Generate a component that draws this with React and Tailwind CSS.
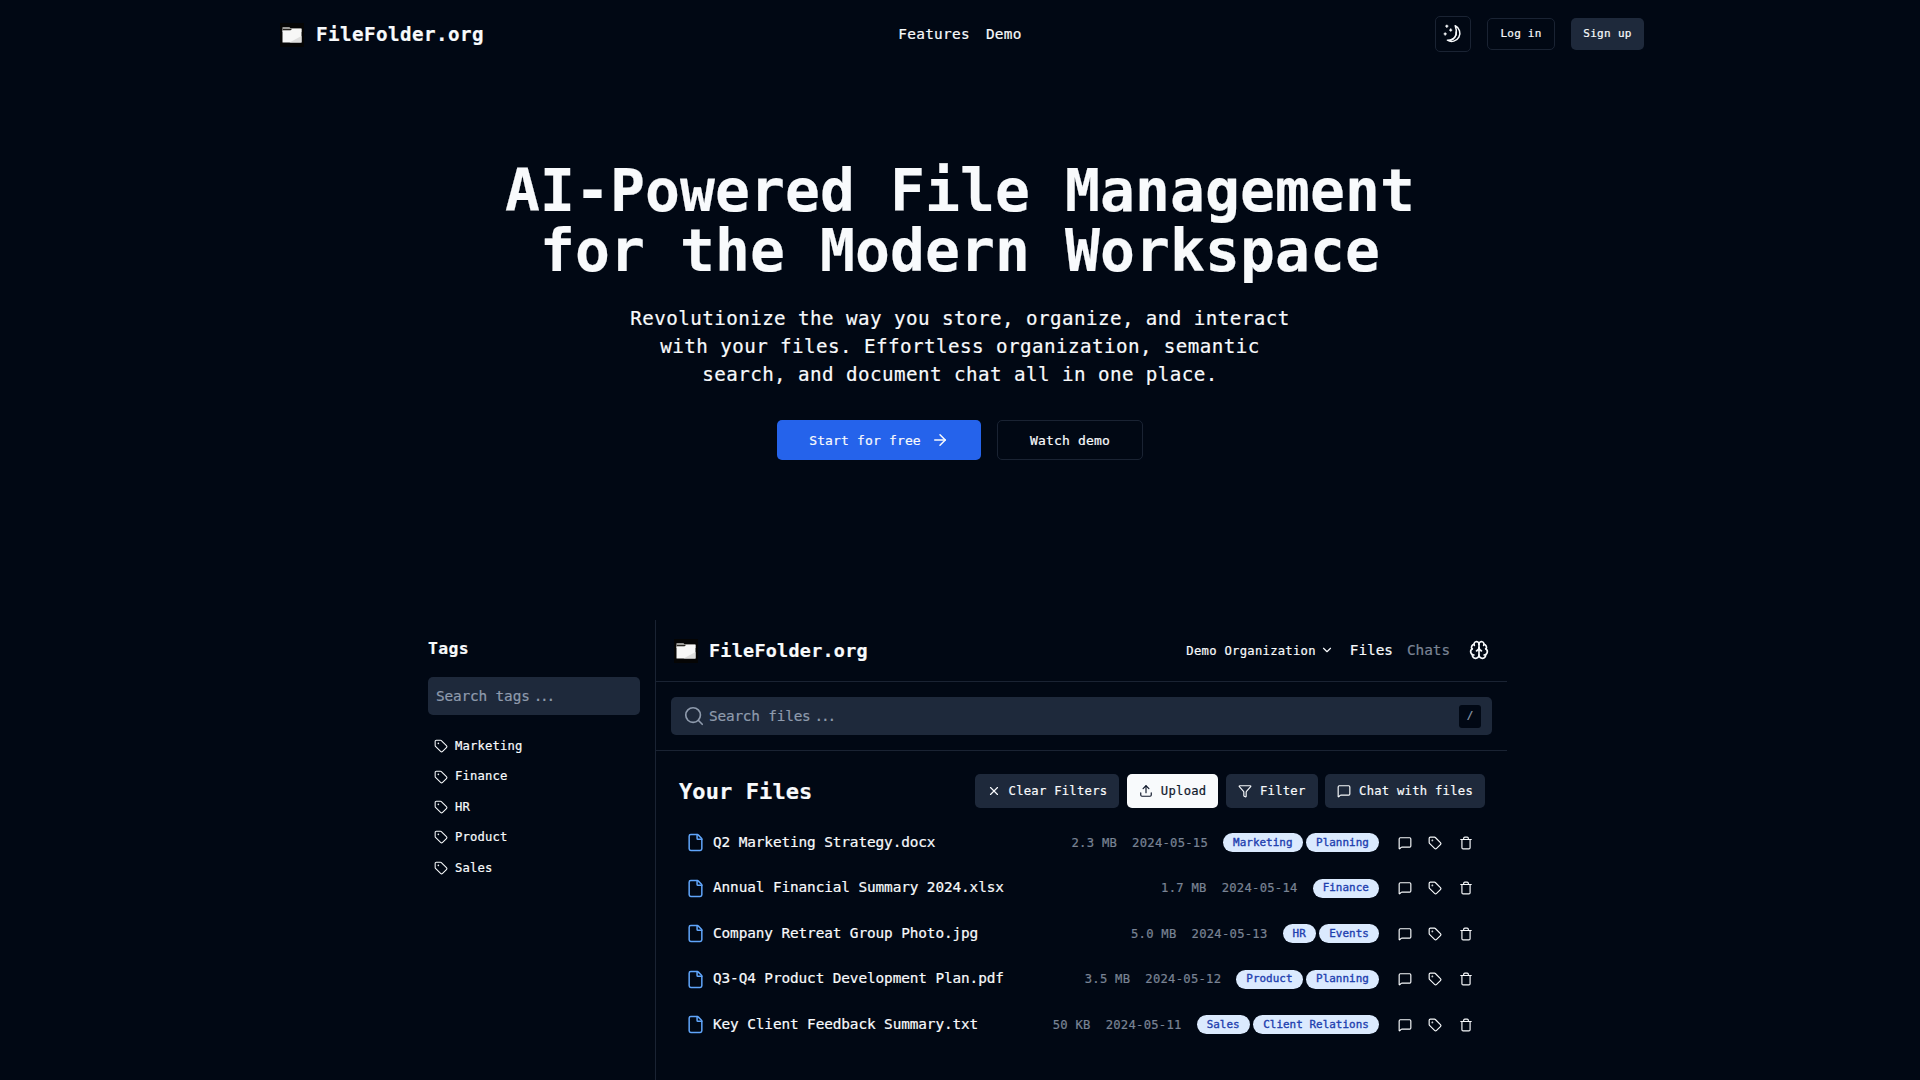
import React from "react";
import { ArrowRight, Brain, ChevronDown, File, Filter, MessageSquare, Search, Tag, Trash, Upload, X } from "lucide-react";

const tags = ["Marketing", "Finance", "HR", "Product", "Sales"];
const files = [
  { name: "Q2 Marketing Strategy.docx", size: "2.3 MB", date: "2024-05-15", tags: ["Marketing", "Planning"] },
  { name: "Annual Financial Summary 2024.xlsx", size: "1.7 MB", date: "2024-05-14", tags: ["Finance"] },
  { name: "Company Retreat Group Photo.jpg", size: "5.0 MB", date: "2024-05-13", tags: ["HR", "Events"] },
  { name: "Q3-Q4 Product Development Plan.pdf", size: "3.5 MB", date: "2024-05-12", tags: ["Product", "Planning"] },
  { name: "Key Client Feedback Summary.txt", size: "50 KB", date: "2024-05-11", tags: ["Sales", "Client Relations"] },
];

function Folder() {
  return (
    <svg className="block h-6 w-6 shrink-0" viewBox="0 0 24 24">
      <rect width="24" height="24" fill="#050505" />
      <path d="M2.500 4.200h7l1 1.100h11V9h-19z" fill="#c9c8c4" />
      <path d="M3 5.800h8l1 .2-1.500 1.500H3z" fill="#26231f" />
      <path d="M2.500 7.600h8l1.800-1.500h9.200v13.400h-19z" fill="#f7f7f6" />
      <path d="M21.500 13v6.500h-12z" fill="#dededd" />
    </svg>
  );
}

function Brand({ compact }) {
  return (
    <div className={compact ? "flex items-center gap-[11px]" : "flex items-center gap-3"}>
      <Folder />
      <span className={"leading-7 font-bold " + (compact ? "text-[18.4px] tracking-[0.28px]" : "text-[19.2px] tracking-[0.44px]")}>FileFolder.org</span>
    </div>
  );
}

function MoonStars() {
  return (
    <svg className="h-5 w-5" viewBox="0 0 20 20" fill="none" stroke="currentColor" strokeLinejoin="round">
      <path d="M12.200 1.800a8.200 8.200 0 1 1-7.800 14.400C9.200 16.200 12.200 14 13 10.600 13.700 7.600 13.400 4.600 12.200 1.800z" strokeWidth="1.500" />
      <path d="M13.400 7.500c.3 4-2.400 7.600-6.400 8.900" strokeWidth="1.500" />
      <path d="M3.800.700v3M2.300 2.200h3M7.700 4.600v3M6.200 6.100h3M2.200 8.400v3M.7 9.900h3" strokeWidth="1.300" />
    </svg>
  );
}

function ToolButton({ icon: Icon, children, light }) {
  return (
    <button className={"flex h-[34px] items-center gap-2 rounded-[5px] px-3 text-[12.2px] tracking-[0.26px] " + (light ? "bg-[#f8fafc] text-[#0f172a]" : "bg-[#1e293b]")}>
      <Icon className="h-[14px] w-[14px]" strokeWidth={2} />
      <span>{children}</span>
    </button>
  );
}

export default function App() {
  return (
    <div className="h-[1080px] overflow-hidden bg-[#010814] font-['DejaVu_Sans_Mono',monospace] text-[#f8fafc] [-webkit-text-stroke:0.2px]">
      <header className="mx-auto grid h-[68px] w-[1364px] grid-cols-[1fr_auto_1fr] items-center">
        <div className="pt-0.5 pl-[2px]"><Brand /></div>
        <nav className="flex gap-4 pt-px text-[14.4px] tracking-[0.29px]">
          <a>Features</a>
          <a>Demo</a>
        </nav>
        <div className="-mr-0.5 flex items-center justify-end gap-4 text-[11px]">
          <button className="flex h-9 w-9 items-center justify-center rounded-[5px] border border-[#1a2333]"><MoonStars /></button>
          <button className="h-8 w-[68px] rounded-[5px] border border-[#1a2333] pt-px tracking-[0.2px]">Log in</button>
          <button className="h-8 w-[73px] rounded-[5px] bg-[#1e293b] pt-px tracking-[0.3px]">Sign up</button>
        </div>
      </header>

      <section className="flex flex-col items-center pt-[93px] text-center">
        <h1 className="text-[58px] leading-[60px] font-bold tracking-[0.08px]">
          AI-Powered File Management<br />for the Modern Workspace
        </h1>
        <p className="mt-6 text-[19.2px] leading-7 tracking-[0.44px]">
          Revolutionize the way you store, organize, and interact<br />
          with your files. Effortless organization, semantic<br />
          search, and document chat all in one place.
        </p>
        <div className="mt-[31px] flex gap-4 text-[13px] tracking-[0.15px]">
          <button className="flex h-10 w-[204px] items-center justify-center gap-2 rounded-[5px] bg-[#2563eb]">
            <span className="pt-px">Start for free</span>
            <ArrowRight className="ml-0.5 h-[18px] w-[18px]" />
          </button>
          <button className="h-10 w-[146px] rounded-[5px] border border-[#1a2333] pt-px">Watch demo</button>
        </div>
      </section>

      <section className="mx-auto mt-[160px] flex h-[460px] w-[1094px]">
        <aside className="w-[243px] shrink-0 border-r border-[#1a2333] pt-[15px] pr-[15px] pl-[15px]">
          <h2 className="text-[16.4px] leading-7 font-bold tracking-[0.4px]">Tags</h2>
          <div className="mt-[14px] flex h-[38px] items-center rounded-[5px] bg-[#1e293b] px-2 pt-px text-[14.4px] text-[#8f9bad]">
            <span className="tracking-[-0.15px]">Search tags</span><span className="ml-1 tracking-[-2.200px]">...</span>
          </div>
          <ul className="mt-4">
            {tags.map((t) => (
              <li key={t} className="flex h-[30.4px] items-center gap-[7.500px] pl-[5.500px] text-[12.2px] tracking-[0.16px]">
                <Tag className="h-[14px] w-[14px]" strokeWidth={1.8} />
                {t}
              </li>
            ))}
          </ul>
        </aside>

        <main className="min-w-0 flex-1">
          <div className="flex h-[62px] items-center justify-between border-b border-[#1a2333] pr-[18px] pl-[18px]">
            <Brand compact />
            <div className="flex items-center text-[14.4px] tracking-[-0.05px]">
              <span className="pt-px text-[12.2px] tracking-[0.28px]">Demo Organization</span>
              <ChevronDown className="ml-1 h-[14px] w-[14px]" />
              <span className="ml-4">Files</span>
              <span className="ml-[14px] text-[#7a8495]">Chats</span>
              <Brain className="ml-[19px] h-5 w-5" />
            </div>
          </div>
          <div className="flex h-[69px] items-center border-b border-[#1a2333] px-[15px]">
            <div className="flex h-[38px] flex-1 items-center rounded-[5px] bg-[#1e293b] pr-[11px] pl-3 text-[14.4px] text-[#8f9bad]">
              <Search className="mr-1 h-[22px] w-[22px]" strokeWidth={1.8} />
              <span className="pt-px tracking-[-0.2px]">Search files</span><span className="ml-1 pt-px tracking-[-2.200px]">...</span>
              <kbd className="ml-auto flex h-[23px] w-[22px] items-center justify-center rounded-[3px] bg-[#010814] font-['DejaVu_Sans_Mono',monospace] text-[11px]">/</kbd>
            </div>
          </div>
          <div className="pt-[23px] pr-[22px] pl-[23px]">
            <div className="flex h-[34px] items-center justify-between">
              <h2 className="text-[22px] font-bold tracking-[0.1px]">Your Files</h2>
              <div className="flex gap-[7.500px]">
                <ToolButton icon={X}>Clear Filters</ToolButton>
                <ToolButton icon={Upload} light>Upload</ToolButton>
                <ToolButton icon={Filter}>Filter</ToolButton>
                <ToolButton icon={MessageSquare}>Chat with files</ToolButton>
              </div>
            </div>
            <ul className="mt-3">
              {files.map((f) => (
                <li key={f.name} className="flex h-[45.5px] items-center pr-[12.500px] pl-[7px]">
                  <File className="h-[19px] w-[19px] text-[#60a5fa]" strokeWidth={1.9} />
                  <span className="ml-2 text-[14.4px] tracking-[-0.11px]">{f.name}</span>
                  <div className="ml-auto flex items-center text-[12.2px] tracking-[0.26px] text-[#7a8495]">
                    <span>{f.size}</span>
                    <span className="ml-[15px]">{f.date}</span>
                    <span className="ml-[15px] flex gap-[3.500px]">
                      {f.tags.map((t) => (
                        <span key={t} className="flex h-[19px] items-center rounded-full bg-[#dbeafe] px-[10px] text-[10.900px] tracking-[0.05px] text-[#1e40af] [-webkit-text-stroke:0.35px]">{t}</span>
                      ))}
                    </span>
                  </div>
                  <div className="ml-[19px] flex gap-[16.300px]">
                    <MessageSquare className="h-[14px] w-[14px]" strokeWidth={2} />
                    <Tag className="h-[14px] w-[14px]" strokeWidth={2} />
                    <Trash className="h-[14px] w-[14px]" strokeWidth={2} />
                  </div>
                </li>
              ))}
            </ul>
          </div>
        </main>
      </section>
    </div>
  );
}
